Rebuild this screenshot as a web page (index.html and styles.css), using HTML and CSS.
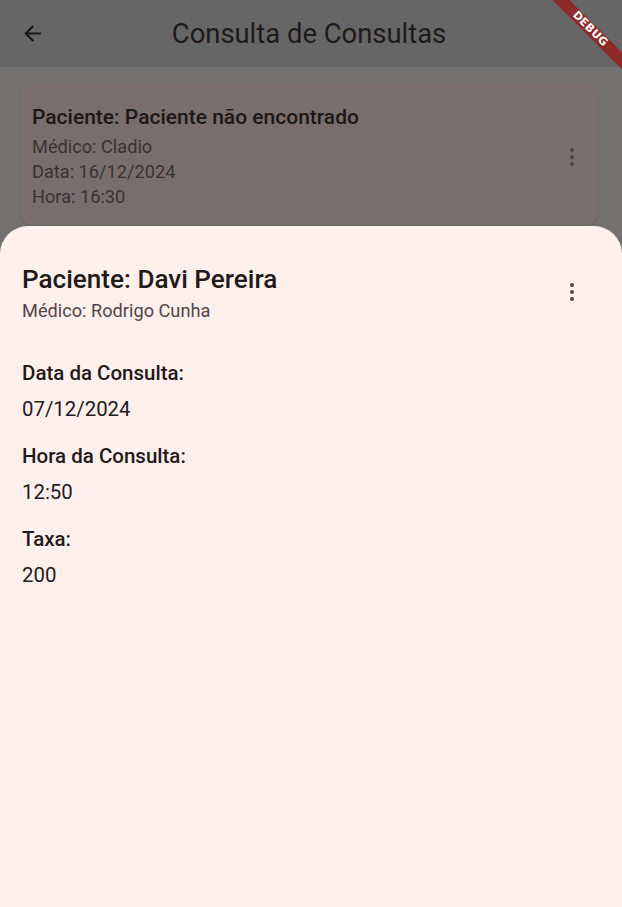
FILE: index.html
```html
<!DOCTYPE html>
<html lang="pt">
<head>
<meta charset="utf-8">
<link rel="stylesheet" href="styles.css">
</head>
<body>
<div class="screen">
  <header class="appbar">
    <svg class="back" viewBox="0 0 24 24" width="25" height="25"><path d="M20 11H7.83l5.59-5.59L12 4l-8 8 8 8 1.41-1.41L7.83 13H20v-2z" fill="#1b1616"/></svg>
    <h1 class="title">Consulta de Consultas</h1>
  </header>
  <main class="list">
    <div class="card">
      <div class="card-text">
        <div class="card-title">Paciente: Paciente não encontrado</div>
        <div class="card-line">Médico: Cladio</div>
        <div class="card-line">Data: 16/12/2024</div>
        <div class="card-line">Hora: 16:30</div>
      </div>
      <svg class="kebab dim" viewBox="0 0 24 24" width="24" height="24"><circle cx="12" cy="5" r="2"/><circle cx="12" cy="12" r="2"/><circle cx="12" cy="19" r="2"/></svg>
    </div>
  </main>
  <section class="sheet">
    <div class="sheet-head">
      <div>
        <div class="sheet-title">Paciente: Davi Pereira</div>
        <div class="sheet-sub">Médico: Rodrigo Cunha</div>
      </div>
      <svg class="kebab" viewBox="0 0 24 24" width="24" height="24"><circle cx="12" cy="5" r="2"/><circle cx="12" cy="12" r="2"/><circle cx="12" cy="19" r="2"/></svg>
    </div>
    <div class="field">
      <div class="label">Data da Consulta:</div>
      <div class="value">07/12/2024</div>
    </div>
    <div class="field">
      <div class="label">Hora da Consulta:</div>
      <div class="value">12:50</div>
    </div>
    <div class="field">
      <div class="label">Taxa:</div>
      <div class="value">200</div>
    </div>
  </section>
  <div class="banner">DEBUG</div>
</div>
</body>
</html>
```

FILE: styles.css
```css
* { box-sizing: border-box; }
html, body { margin: 0; padding: 0; }
body {
  font-family: Roboto, "Noto Sans", sans-serif;
  background: #737070;
}
.screen {
  position: relative;
  width: 622px;
  height: 907px;
  overflow: hidden;
  background: #737070;
}
.appbar {
  height: 67px;
  background: #666666;
  display: flex;
  align-items: center;
  position: relative;
  padding-left: 20px;
}
.back { display: block; }
.title {
  position: absolute;
  left: 0;
  right: 4px;
  margin: 0;
  text-align: center;
  font-weight: 400;
  font-size: 27.4px;
  line-height: 32px;
  color: #1e1a1a;
  pointer-events: none;
}
.list { padding: 16px 24px 0 20px; }
.card {
  background: #776e6d;
  border-radius: 12px;
  padding: 22px 14px 16px 12px;
  display: flex;
  align-items: center;
  justify-content: space-between;
  box-shadow: 0 1px 2px rgba(0,0,0,0.12);
}
.card-title {
  font-size: 21px;
  font-weight: 500;
  line-height: 25px;
  color: #1d1818;
  margin-bottom: 4px;
}
.card-line {
  font-size: 18.2px;
  line-height: 25px;
  color: #3a3333;
}
.kebab { fill: #514345; display: block; }
.kebab.dim { fill: #4a4444; }
.sheet {
  position: absolute;
  left: 0;
  right: 0;
  top: 226px;
  bottom: 0;
  background: #fff0ee;
  border-radius: 28px 28px 0 0;
  padding: 37px 38px 0 22px;
}
.sheet-head {
  display: flex;
  justify-content: space-between;
  align-items: flex-start;
  margin-bottom: 39px;
}
.sheet-head .kebab { margin-top: 17px; }
.sheet-title {
  font-size: 26.1px;
  font-weight: 500;
  line-height: 33px;
  color: #231919;
  margin-bottom: 4px;
}
.sheet-sub {
  font-size: 18.2px;
  line-height: 22px;
  color: #534345;
}
.field { margin-bottom: 23px; }
.label {
  font-size: 20.5px;
  font-weight: 500;
  line-height: 24px;
  color: #231919;
  margin-bottom: 12px;
}
.value {
  font-size: 20.4px;
  font-weight: 400;
  line-height: 24px;
  color: #231919;
}
.banner {
  position: absolute;
  width: 130px;
  height: 12px;
  left: 524.5px;
  top: 23px;
  transform: rotate(45deg);
  background: #8f2a2a;
  color: #fff;
  font-family: "DejaVu Sans", sans-serif;
  font-weight: 700;
  font-size: 11px;
  line-height: 12px;
  text-align: center;
  letter-spacing: 0.3px;
}
```
